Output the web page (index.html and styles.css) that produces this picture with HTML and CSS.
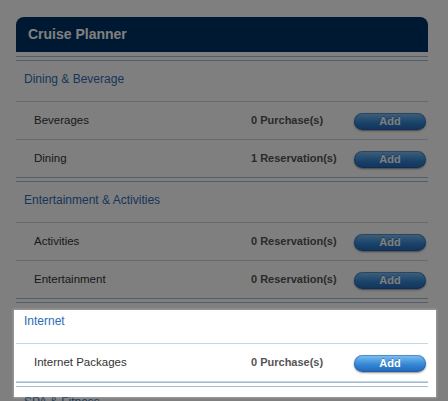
FILE: index.html
```html
<!DOCTYPE html>
<html lang="en">
<head>
<meta charset="utf-8">
<title>Cruise Planner</title>
<link rel="stylesheet" href="styles.css">
</head>
<body>
<div class="planner">
  <div class="planner-header">Cruise Planner</div>
  <div class="divider"></div>

  <section class="group">
    <h2 class="group-title">Dining &amp; Beverage</h2>
    <div class="item"><span class="item-name">Beverages</span><span class="item-count">0 Purchase(s)</span><button class="add-btn">Add</button></div>
    <div class="item"><span class="item-name">Dining</span><span class="item-count">1 Reservation(s)</span><button class="add-btn">Add</button></div>
  </section>
  <div class="divider"></div>

  <section class="group">
    <h2 class="group-title">Entertainment &amp; Activities</h2>
    <div class="item"><span class="item-name">Activities</span><span class="item-count">0 Reservation(s)</span><button class="add-btn">Add</button></div>
    <div class="item"><span class="item-name">Entertainment</span><span class="item-count">0 Reservation(s)</span><button class="add-btn">Add</button></div>
  </section>
  <div class="divider"></div>

  <section class="group group-highlighted">
    <h2 class="group-title">Internet</h2>
    <div class="item"><span class="item-name">Internet Packages</span><span class="item-count">0 Purchase(s)</span><button class="add-btn">Add</button></div>
    <div class="spotlight"></div>
  </section>
  <div class="divider"></div>

  <section class="group">
    <h2 class="group-title group-title-next">SPA &amp; Fitness</h2>
  </section>
</div>
</body>
</html>
```

FILE: styles.css
```css
html, body {
  margin: 0;
  padding: 0;
  background: #ffffff;
  overflow: hidden;
}

body {
  font-family: "Liberation Sans", Arial, Helvetica, sans-serif;
}

.planner {
  width: 412px;
  margin: 17px 0 0 16px;
}

.planner-header {
  height: 35px;
  line-height: 35px;
  padding-left: 12px;
  margin-bottom: 4px;
  background: #003366;
  border-radius: 8px 8px 0 0;
  color: #ffffff;
  font-size: 14px;
  font-weight: bold;
}

.divider {
  height: 3px;
  border-top: 1px solid #a3bdd3;
  border-bottom: 1px solid #a3bdd3;
}

.group {
  position: relative;
}

.group-title {
  margin: 0;
  height: 30px;
  padding: 10px 0 0 8px;
  line-height: 16px;
  font-size: 12px;
  font-weight: normal;
  color: #2e6db4;
  border-bottom: 1px solid #c5d6e3;
}

.group-title-next {
  padding-top: 7px;
  height: 33px;
}

.item {
  display: grid;
  grid-template-columns: 1fr 103px 72px;
  align-items: center;
  height: 37px;
  padding: 0 2px 0 18px;
  border-bottom: 1px solid #c5d6e3;
}

.item:last-of-type {
  border-bottom: none;
}

.item-name {
  font-size: 11.5px;
  color: #333333;
  margin-bottom: 2px;
}

.item-count {
  font-size: 11px;
  font-weight: bold;
  color: #555555;
  margin-bottom: 2px;
}

.add-btn {
  width: 72px;
  height: 17px;
  margin-top: 2px;
  padding: 0;
  border: 0;
  border-radius: 9px;
  background: linear-gradient(#86c2f1 0%, #4e9de2 35%, #3284d2 60%, #2567b5 100%);
  box-shadow: 0 1px 2px rgba(0, 0, 0, 0.45), inset 0 0 0 1px rgba(25, 80, 150, 0.45);
  color: #ffffff;
  font-family: "Liberation Sans", Arial, Helvetica, sans-serif;
  font-size: 11px;
  font-weight: bold;
  line-height: 17px;
  text-shadow: 0 -1px 0 rgba(0, 40, 90, 0.35);
}

.spotlight {
  position: absolute;
  top: 7px;
  left: -2px;
  right: -8px;
  height: 87px;
  z-index: 10;
  pointer-events: none;
  box-shadow: 0 0 2px 1px rgba(255, 255, 255, 0.25), 0 0 0 2000px rgba(0, 0, 0, 0.5);
}
```
